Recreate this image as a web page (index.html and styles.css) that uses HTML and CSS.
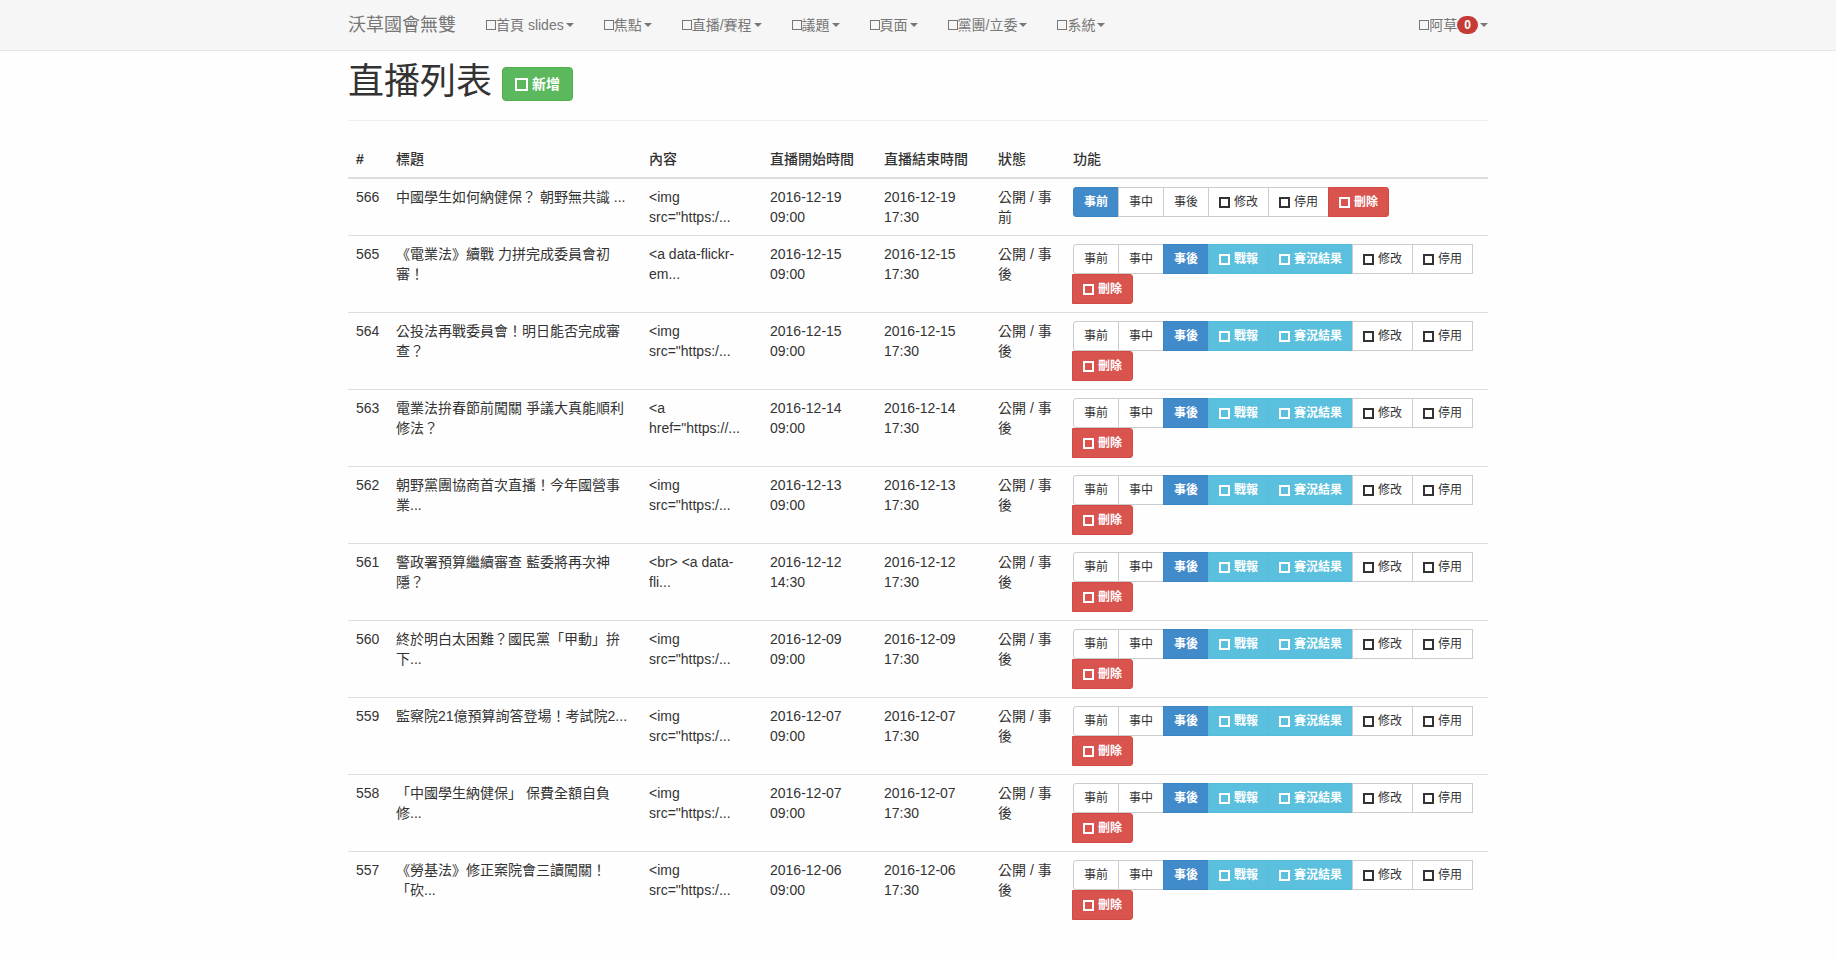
FILE: index.html
```html
<!DOCTYPE html>
<html lang="zh-Hant">
<head>
<meta charset="utf-8">
<meta name="viewport" content="width=device-width, initial-scale=1">
<title>直播列表 - 沃草國會無雙</title>
<link rel="stylesheet" href="styles.css">
</head>
<body>
<header class="navbar">
  <nav class="container navbar-inner">
    <a class="brand" href="#">沃草國會無雙</a>
    <ul class="nav">
      <li><a href="#"><i class="icon"></i>首頁 slides<b class="caret"></b></a></li>
      <li><a href="#"><i class="icon"></i>焦點<b class="caret"></b></a></li>
      <li><a href="#"><i class="icon"></i>直播/賽程<b class="caret"></b></a></li>
      <li><a href="#"><i class="icon"></i>議題<b class="caret"></b></a></li>
      <li><a href="#"><i class="icon"></i>頁面<b class="caret"></b></a></li>
      <li><a href="#"><i class="icon"></i>黨團/立委<b class="caret"></b></a></li>
      <li><a href="#"><i class="icon"></i>系統<b class="caret"></b></a></li>
    </ul>
    <a class="user" href="#"><i class="icon"></i>阿草<span class="badge">0</span><b class="caret"></b></a>
  </nav>
</header>
<main class="container">
  <div class="page-header">
    <h1>直播列表</h1>
    <button class="btn btn-new" type="button"><i class="icon"></i>新增</button>
  </div>
  <table class="table">
    <colgroup>
      <col class="col-id"><col class="col-title"><col class="col-content"><col class="col-time"><col class="col-time"><col class="col-status"><col>
    </colgroup>
    <thead>
      <tr><th>#</th><th>標題</th><th>內容</th><th>直播開始時間</th><th>直播結束時間</th><th>狀態</th><th>功能</th></tr>
    </thead>
    <tbody>
      <tr>
        <td>566</td><td>中國學生如何納健保？ 朝野無共識 ...</td><td>&lt;img src="https:/...</td><td>2016-12-19 09:00</td><td>2016-12-19 17:30</td><td>公開 / 事前</td>
        <td><div class="btn-group"><button class="btn primary" type="button">事前</button><button class="btn" type="button">事中</button><button class="btn" type="button">事後</button><button class="btn" type="button"><i class="icon"></i>修改</button><button class="btn" type="button"><i class="icon"></i>停用</button><button class="btn danger" type="button"><i class="icon"></i>刪除</button></div></td>
      </tr>
      <tr>
        <td>565</td><td>《電業法》續戰 力拼完成委員會初審！</td><td>&lt;a data-flickr-em...</td><td>2016-12-15 09:00</td><td>2016-12-15 17:30</td><td>公開 / 事後</td>
        <td><div class="btn-group"><button class="btn" type="button">事前</button><button class="btn" type="button">事中</button><button class="btn primary" type="button">事後</button><button class="btn info" type="button"><i class="icon"></i>戰報</button><button class="btn info" type="button"><i class="icon"></i>賽況結果</button><button class="btn" type="button"><i class="icon"></i>修改</button><button class="btn" type="button"><i class="icon"></i>停用</button><button class="btn danger" type="button"><i class="icon"></i>刪除</button></div></td>
      </tr>
      <tr>
        <td>564</td><td>公投法再戰委員會！明日能否完成審查？</td><td>&lt;img src="https:/...</td><td>2016-12-15 09:00</td><td>2016-12-15 17:30</td><td>公開 / 事後</td>
        <td><div class="btn-group"><button class="btn" type="button">事前</button><button class="btn" type="button">事中</button><button class="btn primary" type="button">事後</button><button class="btn info" type="button"><i class="icon"></i>戰報</button><button class="btn info" type="button"><i class="icon"></i>賽況結果</button><button class="btn" type="button"><i class="icon"></i>修改</button><button class="btn" type="button"><i class="icon"></i>停用</button><button class="btn danger" type="button"><i class="icon"></i>刪除</button></div></td>
      </tr>
      <tr>
        <td>563</td><td>電業法拚春節前闖關 爭議大真能順利修法？</td><td>&lt;a href="https://...</td><td>2016-12-14 09:00</td><td>2016-12-14 17:30</td><td>公開 / 事後</td>
        <td><div class="btn-group"><button class="btn" type="button">事前</button><button class="btn" type="button">事中</button><button class="btn primary" type="button">事後</button><button class="btn info" type="button"><i class="icon"></i>戰報</button><button class="btn info" type="button"><i class="icon"></i>賽況結果</button><button class="btn" type="button"><i class="icon"></i>修改</button><button class="btn" type="button"><i class="icon"></i>停用</button><button class="btn danger" type="button"><i class="icon"></i>刪除</button></div></td>
      </tr>
      <tr>
        <td>562</td><td>朝野黨團協商首次直播！今年國營事業...</td><td>&lt;img src="https:/...</td><td>2016-12-13 09:00</td><td>2016-12-13 17:30</td><td>公開 / 事後</td>
        <td><div class="btn-group"><button class="btn" type="button">事前</button><button class="btn" type="button">事中</button><button class="btn primary" type="button">事後</button><button class="btn info" type="button"><i class="icon"></i>戰報</button><button class="btn info" type="button"><i class="icon"></i>賽況結果</button><button class="btn" type="button"><i class="icon"></i>修改</button><button class="btn" type="button"><i class="icon"></i>停用</button><button class="btn danger" type="button"><i class="icon"></i>刪除</button></div></td>
      </tr>
      <tr>
        <td>561</td><td>警政署預算繼續審查 藍委將再次神隱？</td><td>&lt;br&gt; &lt;a data-fli...</td><td>2016-12-12 14:30</td><td>2016-12-12 17:30</td><td>公開 / 事後</td>
        <td><div class="btn-group"><button class="btn" type="button">事前</button><button class="btn" type="button">事中</button><button class="btn primary" type="button">事後</button><button class="btn info" type="button"><i class="icon"></i>戰報</button><button class="btn info" type="button"><i class="icon"></i>賽況結果</button><button class="btn" type="button"><i class="icon"></i>修改</button><button class="btn" type="button"><i class="icon"></i>停用</button><button class="btn danger" type="button"><i class="icon"></i>刪除</button></div></td>
      </tr>
      <tr>
        <td>560</td><td>終於明白太困難？國民黨「甲動」拚下...</td><td>&lt;img src="https:/...</td><td>2016-12-09 09:00</td><td>2016-12-09 17:30</td><td>公開 / 事後</td>
        <td><div class="btn-group"><button class="btn" type="button">事前</button><button class="btn" type="button">事中</button><button class="btn primary" type="button">事後</button><button class="btn info" type="button"><i class="icon"></i>戰報</button><button class="btn info" type="button"><i class="icon"></i>賽況結果</button><button class="btn" type="button"><i class="icon"></i>修改</button><button class="btn" type="button"><i class="icon"></i>停用</button><button class="btn danger" type="button"><i class="icon"></i>刪除</button></div></td>
      </tr>
      <tr>
        <td>559</td><td>監察院21億預算詢答登場！考試院2...</td><td>&lt;img src="https:/...</td><td>2016-12-07 09:00</td><td>2016-12-07 17:30</td><td>公開 / 事後</td>
        <td><div class="btn-group"><button class="btn" type="button">事前</button><button class="btn" type="button">事中</button><button class="btn primary" type="button">事後</button><button class="btn info" type="button"><i class="icon"></i>戰報</button><button class="btn info" type="button"><i class="icon"></i>賽況結果</button><button class="btn" type="button"><i class="icon"></i>修改</button><button class="btn" type="button"><i class="icon"></i>停用</button><button class="btn danger" type="button"><i class="icon"></i>刪除</button></div></td>
      </tr>
      <tr>
        <td>558</td><td>「中國學生納健保」 保費全額自負修...</td><td>&lt;img src="https:/...</td><td>2016-12-07 09:00</td><td>2016-12-07 17:30</td><td>公開 / 事後</td>
        <td><div class="btn-group"><button class="btn" type="button">事前</button><button class="btn" type="button">事中</button><button class="btn primary" type="button">事後</button><button class="btn info" type="button"><i class="icon"></i>戰報</button><button class="btn info" type="button"><i class="icon"></i>賽況結果</button><button class="btn" type="button"><i class="icon"></i>修改</button><button class="btn" type="button"><i class="icon"></i>停用</button><button class="btn danger" type="button"><i class="icon"></i>刪除</button></div></td>
      </tr>
      <tr>
        <td>557</td><td>《勞基法》修正案院會三讀闖關！「砍...</td><td>&lt;img src="https:/...</td><td>2016-12-06 09:00</td><td>2016-12-06 17:30</td><td>公開 / 事後</td>
        <td><div class="btn-group"><button class="btn" type="button">事前</button><button class="btn" type="button">事中</button><button class="btn primary" type="button">事後</button><button class="btn info" type="button"><i class="icon"></i>戰報</button><button class="btn info" type="button"><i class="icon"></i>賽況結果</button><button class="btn" type="button"><i class="icon"></i>修改</button><button class="btn" type="button"><i class="icon"></i>停用</button><button class="btn danger" type="button"><i class="icon"></i>刪除</button></div></td>
      </tr>
    </tbody>
  </table>
</main>
</body>
</html>
```
FILE: styles.css
```css
* {
  box-sizing: border-box;
}

body {
  margin: 0;
  background: #fefefe;
  color: #333;
  font: 14px/20px "Liberation Sans", "Noto Sans CJK TC", sans-serif;
  text-spacing-trim: space-all;
}

a {
  color: inherit;
  text-decoration: none;
}

.container {
  max-width: 1170px;
  margin: 0 auto;
  padding: 0 15px;
}

/* Navigation bar */
.navbar {
  background: #f6f6f6;
  border-bottom: 1px solid #e7e7e7;
  color: #777;
}

.navbar-inner {
  display: flex;
  align-items: center;
  height: 50px;
}

.brand {
  padding-right: 15px;
  font-size: 18px;
}

.nav {
  display: flex;
  margin: 0;
  padding: 0;
  list-style: none;
}

.nav a {
  display: flex;
  align-items: center;
  padding: 15px;
}

.user {
  display: flex;
  align-items: center;
  margin-left: auto;
}

.icon {
  display: inline-block;
  flex: none;
  width: 10px;
  height: 10px;
  border: 1px solid currentColor;
}

.caret {
  width: 0;
  height: 0;
  margin-left: 2px;
  border-top: 4px solid currentColor;
  border-right: 4px solid transparent;
  border-left: 4px solid transparent;
}

.badge {
  padding: 3px 7px;
  border-radius: 10px;
  background: #c43c35;
  color: #fff;
  font-size: 12px;
  font-weight: 700;
  line-height: 12px;
}

/* Page title */
.page-header {
  display: flex;
  align-items: flex-end;
  gap: 10px;
  margin-bottom: 20px;
  padding: 12px 0 19px;
  border-bottom: 1px solid #eee;
}

h1 {
  margin: 0;
  font-size: 36px;
  font-weight: 400;
  line-height: 38px;
}

/* Buttons */
.btn {
  display: flex;
  align-items: center;
  padding: 5px 10px;
  border: 1px solid #ccc;
  background: #fff;
  color: #333;
  font: inherit;
  font-size: 12px;
  line-height: 18px;
  cursor: pointer;
}

.btn .icon {
  width: 11px;
  height: 11px;
  margin-right: 4px;
  border-width: 2px;
}

.btn-new {
  padding: 6px 12px;
  border-color: #4cae4c;
  border-radius: 4px;
  background: #5cb85c;
  color: #fff;
  font-size: 14px;
  font-weight: 700;
  line-height: 20px;
}

.btn-new .icon {
  width: 13px;
  height: 13px;
}

.btn-group {
  display: flex;
  flex-wrap: wrap;
}

.btn-group .btn + .btn {
  margin-left: -1px;
}

.btn-group .btn:first-child {
  border-radius: 3px 0 0 3px;
}

.btn-group .btn:last-child {
  border-radius: 0 3px 3px 0;
}

.btn-group .primary,
.btn-group .info,
.btn-group .danger {
  color: #fff;
  font-weight: 700;
}

.btn-group .primary {
  border-color: #3b85c5;
  background: #428bca;
}

.btn-group .info {
  border-color: #55bddc;
  background: #5bc0de;
}

.btn-group .danger {
  border-color: #d54945;
  background: #d9534f;
}

/* Table of broadcasts */
.table {
  width: 100%;
  border-collapse: separate;
  border-spacing: 0;
  table-layout: fixed;
}

.table th,
.table td {
  padding: 8px;
  text-align: left;
  vertical-align: top;
}

.table th {
  border-bottom: 2px solid #ddd;
  font-weight: 500;
}

.table th:first-child {
  font-weight: 700;
}

.table tr + tr td {
  border-top: 1px solid #ddd;
}

.col-id {
  width: 40px;
}

.col-title {
  width: 253px;
}

.col-content {
  width: 121px;
}

.col-time {
  width: 114px;
}

.col-status {
  width: 75px;
}
```
